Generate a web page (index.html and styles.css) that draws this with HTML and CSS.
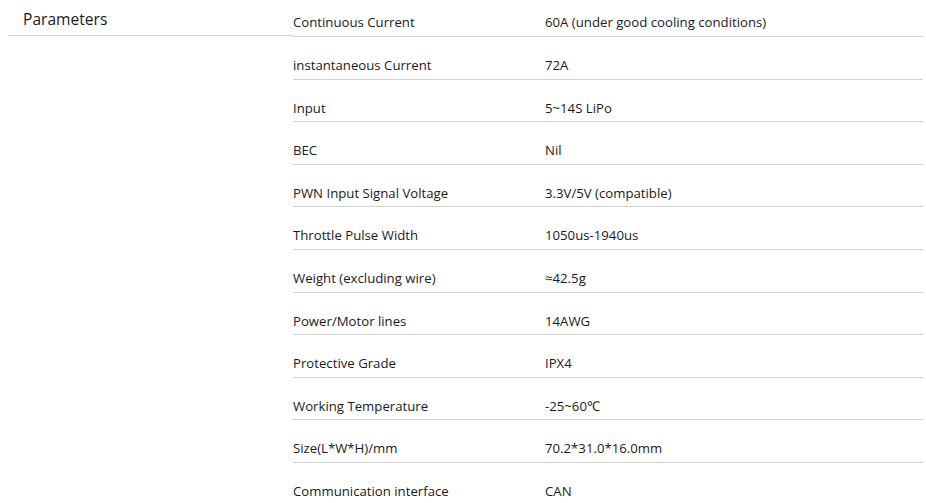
FILE: index.html
```html
<!DOCTYPE html>
<html>
<head>
<meta charset="utf-8">
<link rel="stylesheet" href="styles.css">
</head>
<body>
<div class="spec">
  <div class="spec-side">
    <div class="spec-title">Parameters</div>
  </div>
  <div class="spec-rows">
    <div class="row first"><div class="k">Continuous Current</div><div class="v">60A (under good cooling conditions)</div></div>
    <div class="row"><div class="k">instantaneous Current</div><div class="v">72A</div></div>
    <div class="row"><div class="k">Input</div><div class="v">5~14S LiPo</div></div>
    <div class="row"><div class="k">BEC</div><div class="v">Nil</div></div>
    <div class="row"><div class="k">PWN Input Signal Voltage</div><div class="v">3.3V/5V (compatible)</div></div>
    <div class="row"><div class="k">Throttle Pulse Width</div><div class="v">1050us-1940us</div></div>
    <div class="row"><div class="k">Weight (excluding wire)</div><div class="v">≈42.5g</div></div>
    <div class="row"><div class="k">Power/Motor lines</div><div class="v">14AWG</div></div>
    <div class="row"><div class="k">Protective Grade</div><div class="v">IPX4</div></div>
    <div class="row"><div class="k">Working Temperature</div><div class="v">-25~60℃</div></div>
    <div class="row"><div class="k">Size(L*W*H)/mm</div><div class="v">70.2*31.0*16.0mm</div></div>
    <div class="row"><div class="k">Communication interface</div><div class="v">CAN</div></div>
  </div>
</div>
</body>
</html>
```
FILE: styles.css
```css
html, body {
  margin: 0;
  padding: 0;
  background: #fff;
}
body {
  font-family: "Open Sans", "Noto Sans", sans-serif;
  color: #1a1a1a;
  overflow: hidden;
}
.spec {
  display: grid;
  grid-template-columns: 285px 630px;
  margin-left: 8px;
}
.spec-side {
  align-self: start;
}
.spec-title {
  height: 36px;
  box-sizing: border-box;
  padding: 8px 0 0 15px;
  font-size: 15.6px;
  line-height: 22px;
  border-bottom: 1px solid #d2d2d2;
}
.row {
  display: grid;
  grid-template-columns: 252px 1fr;
  font-size: 13.2px;
  line-height: 20px;
  padding: 18px 0 3.6px;
  border-bottom: 1px solid #d2d2d2;
}
.row.first {
  padding-top: 12.4px;
}
```
